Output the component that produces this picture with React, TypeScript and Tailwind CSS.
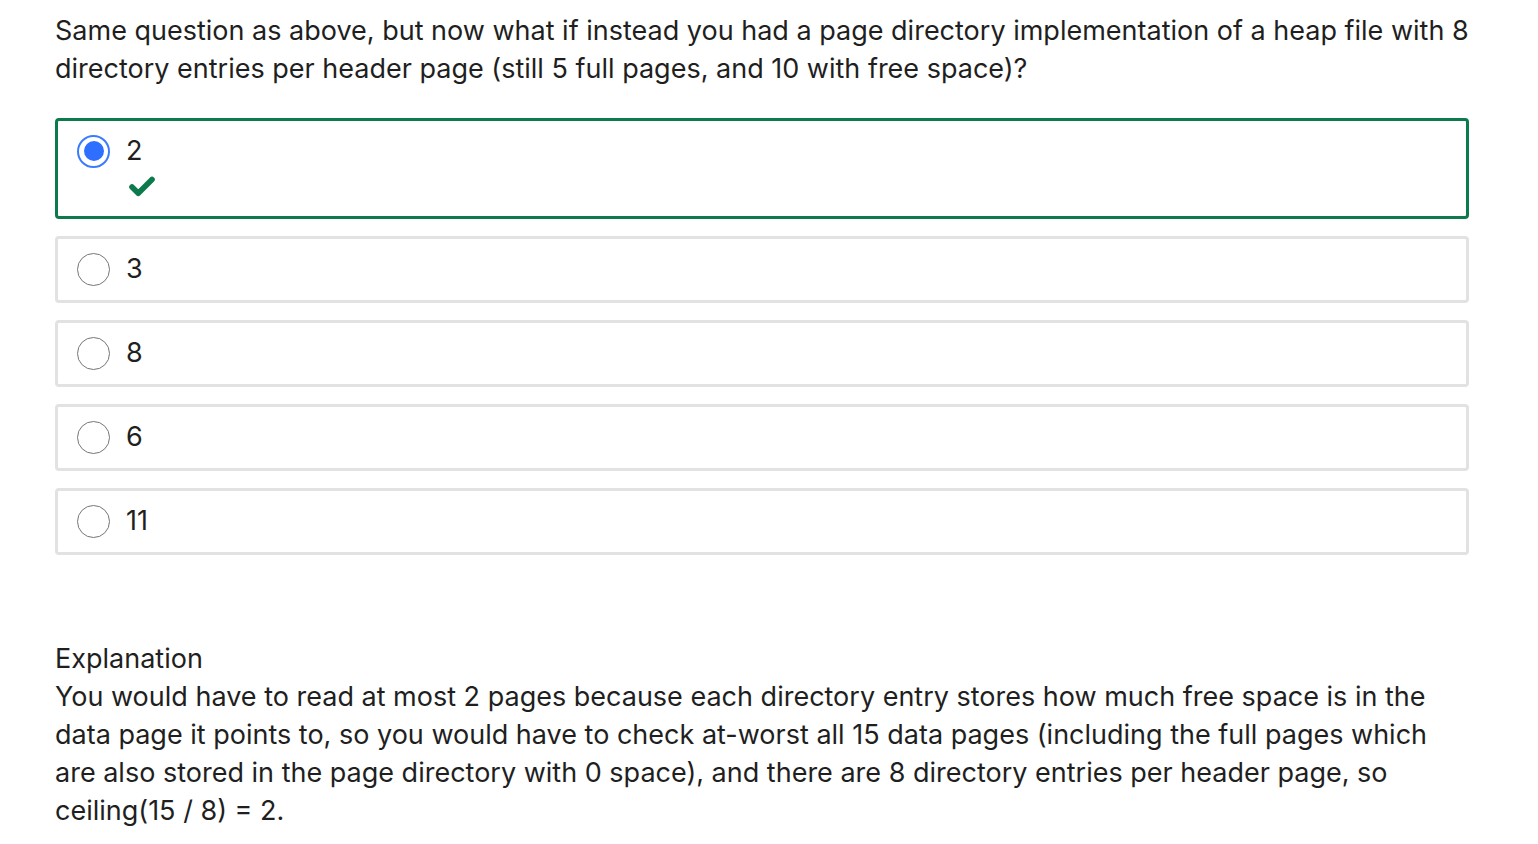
import { Check } from 'lucide-react';

const OPTIONS = [
  { label: '2', selected: true, correct: true },
  { label: '3' },
  { label: '8' },
  { label: '6' },
  { label: '11' },
] as { label: string; selected?: boolean; correct?: boolean }[];

export default function App() {
  return (
    <div className="min-h-screen bg-white text-[#1f1f1f]" style={{ fontFamily: 'Inter, "Noto Sans", sans-serif' }}>
      <div className="ml-[55px] w-[1414px] pt-[12px] text-[27px] leading-[38px]">
        <p>
          Same question as above, but now what if instead you had a page directory implementation of a heap file with 8
          directory entries per header page (still 5 full pages, and 10 with free space)?
        </p>

        <div className="mt-[30px] flex flex-col gap-[17px]">
          {OPTIONS.map((o) => (
            <Option key={o.label} {...o} />
          ))}
        </div>

        <div className="mt-[85px]">
          <div>Explanation</div>
          <p>
            You would have to read at most 2 pages because each directory entry stores how much free space is in the
            data page it points to, so you would have to check at-worst all 15 data pages (including the full pages which
            are also stored in the page directory with 0 space), and there are 8 directory entries per header page, so
            ceiling(15 / 8) = 2.
          </p>
        </div>
      </div>
    </div>
  );
}

function Option({ label, selected, correct }: { label: string; selected?: boolean; correct?: boolean }) {
  return (
    <div
      className={
        selected
          ? 'rounded-[4px] border-[3px] border-[#0d7a4e] pl-[19px] pt-[11px] pb-[12px]'
          : 'rounded-[4px] border-[3px] border-[#e2e2e2] pl-[19px] pt-[11px] pb-[12px]'
      }
    >
      <div className="flex items-center h-[38px]">
        {selected ? (
          <span className="w-[33px] h-[33px] rounded-full border-[2px] border-[#3b7cff] grid place-items-center">
            <span className="w-[20px] h-[20px] rounded-full bg-[#2f6fff]" />
          </span>
        ) : (
          <span className="w-[33px] h-[33px] rounded-full border-[1.5px] border-[#767676]" />
        )}
        <span className="ml-[16px]">{label}</span>
      </div>
      {correct && (
        <div className="h-[34px] pl-[50px] pt-[2px]">
          <Check size={30} strokeWidth={4.5} className="text-[#0d7a4e]" />
        </div>
      )}
    </div>
  );
}
